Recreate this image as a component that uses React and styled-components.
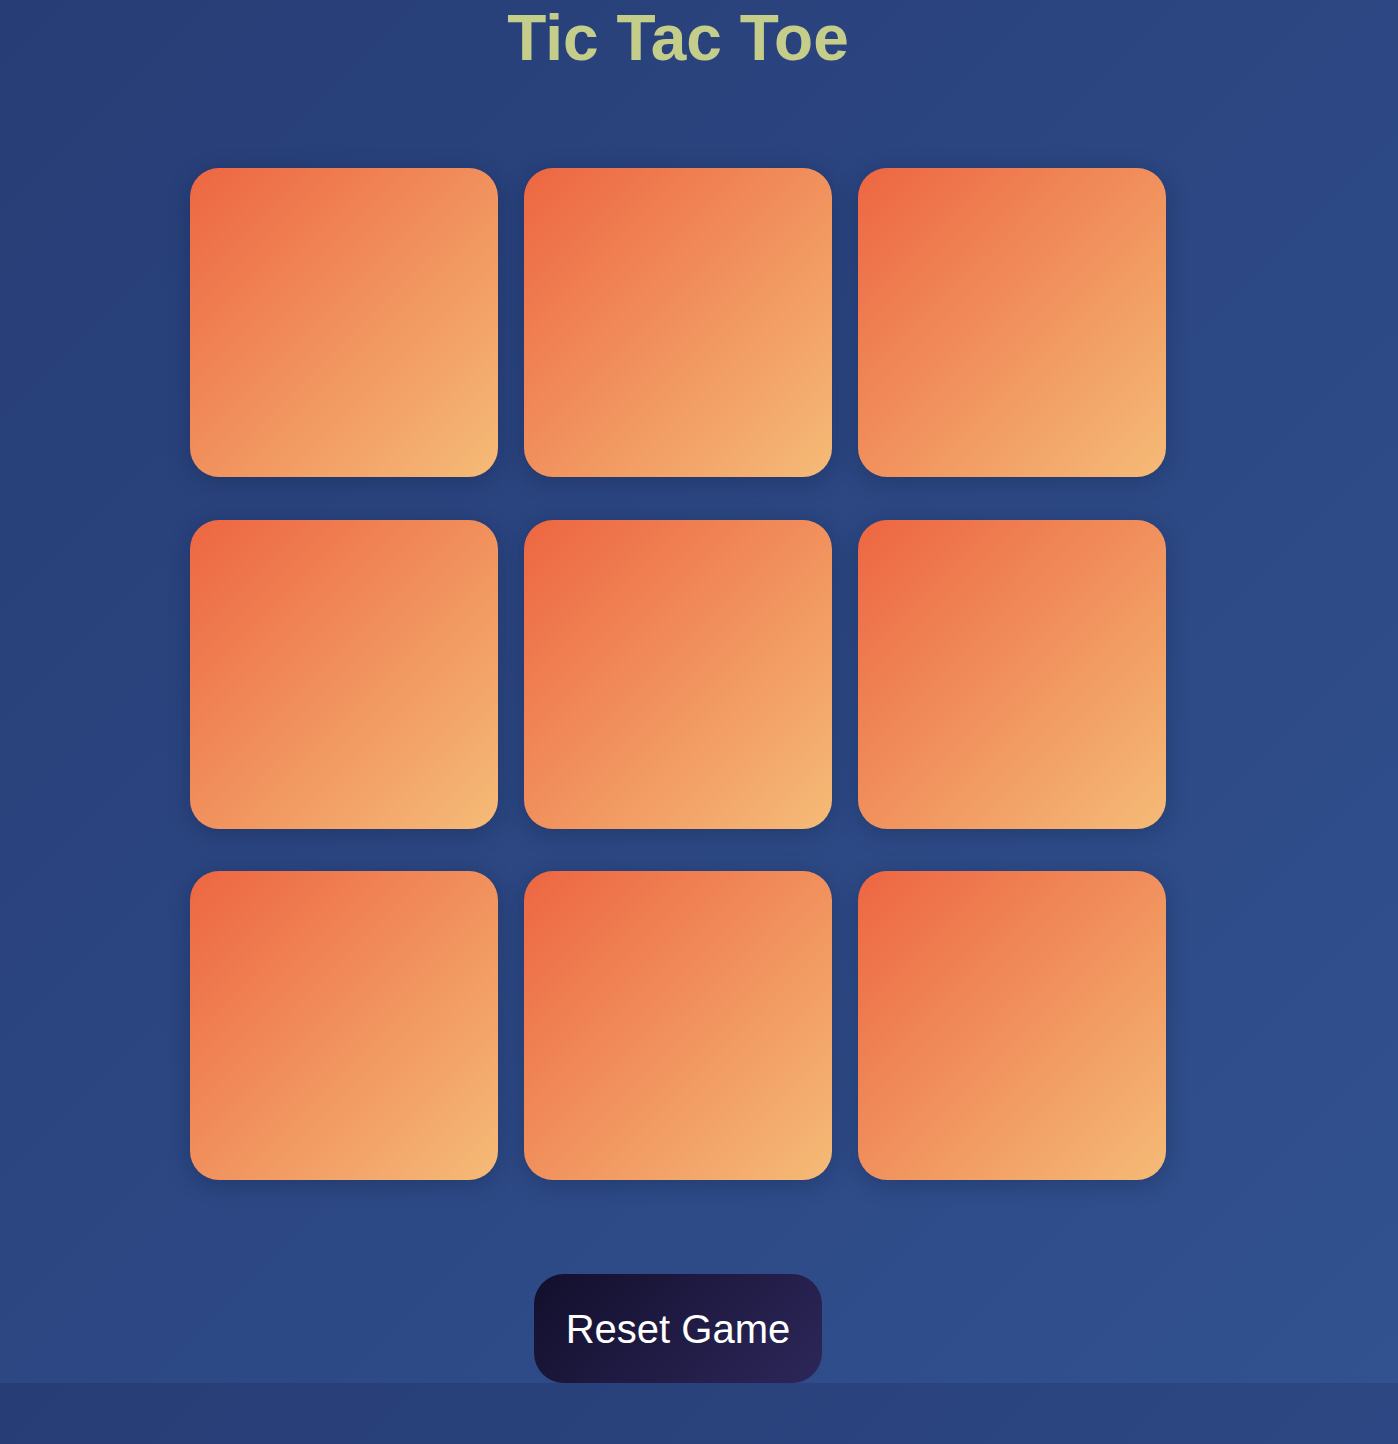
import React, { useState } from "react";
import styled, { createGlobalStyle } from "styled-components";

const GlobalStyle = createGlobalStyle`
  html, body {
    margin: 0;
    padding: 0;
  }
  body {
    background: linear-gradient(135deg, #273d76 0%, #31518f 100%);
    font-family: "Liberation Sans", Arial, sans-serif;
  }
`;

const Page = styled.div`
  width: calc(100% - 42px);
  display: flex;
  flex-direction: column;
  align-items: center;
`;

const Title = styled.h1`
  margin: 0 0 92px;
  height: 76px;
  line-height: 76px;
  font-size: 64px;
  font-weight: 700;
  color: #c5cd8b;
  text-align: center;
`;

const Board = styled.div`
  display: grid;
  grid-template-columns: repeat(3, 308px);
  grid-auto-rows: 309px;
  column-gap: 26px;
  row-gap: 42.5px;
`;

const Cell = styled.div`
  border-radius: 29px;
  background: linear-gradient(135deg, #ed6642 0%, #f5bb77 100%);
  box-shadow: 0 4px 22px rgba(10, 20, 50, 0.28);
  display: flex;
  align-items: center;
  justify-content: center;
  font-size: 160px;
  font-weight: 700;
  color: #1a1637;
  cursor: pointer;
  user-select: none;
`;

const ResetButton = styled.button`
  margin-top: 94px;
  height: 109px;
  padding: 0 32px;
  border: none;
  border-radius: 30px;
  background: linear-gradient(135deg, #120f2c 0%, #2d275a 100%);
  color: #ffffff;
  font-family: "Liberation Sans", Arial, sans-serif;
  font-size: 40px;
  line-height: 46px;
  cursor: pointer;
`;

export default function App() {
  const [cells, setCells] = useState(Array(9).fill(""));
  const [xTurn, setXTurn] = useState(true);

  const play = (i) => {
    if (cells[i]) return;
    const next = cells.slice();
    next[i] = xTurn ? "X" : "O";
    setCells(next);
    setXTurn(!xTurn);
  };

  const reset = () => {
    setCells(Array(9).fill(""));
    setXTurn(true);
  };

  return (
    <>
      <GlobalStyle />
      <Page>
        <Title>Tic Tac Toe</Title>
        <Board>
          {cells.map((v, i) => (
            <Cell key={i} onClick={() => play(i)}>
              {v}
            </Cell>
          ))}
        </Board>
        <ResetButton onClick={reset}>Reset Game</ResetButton>
      </Page>
    </>
  );
}
